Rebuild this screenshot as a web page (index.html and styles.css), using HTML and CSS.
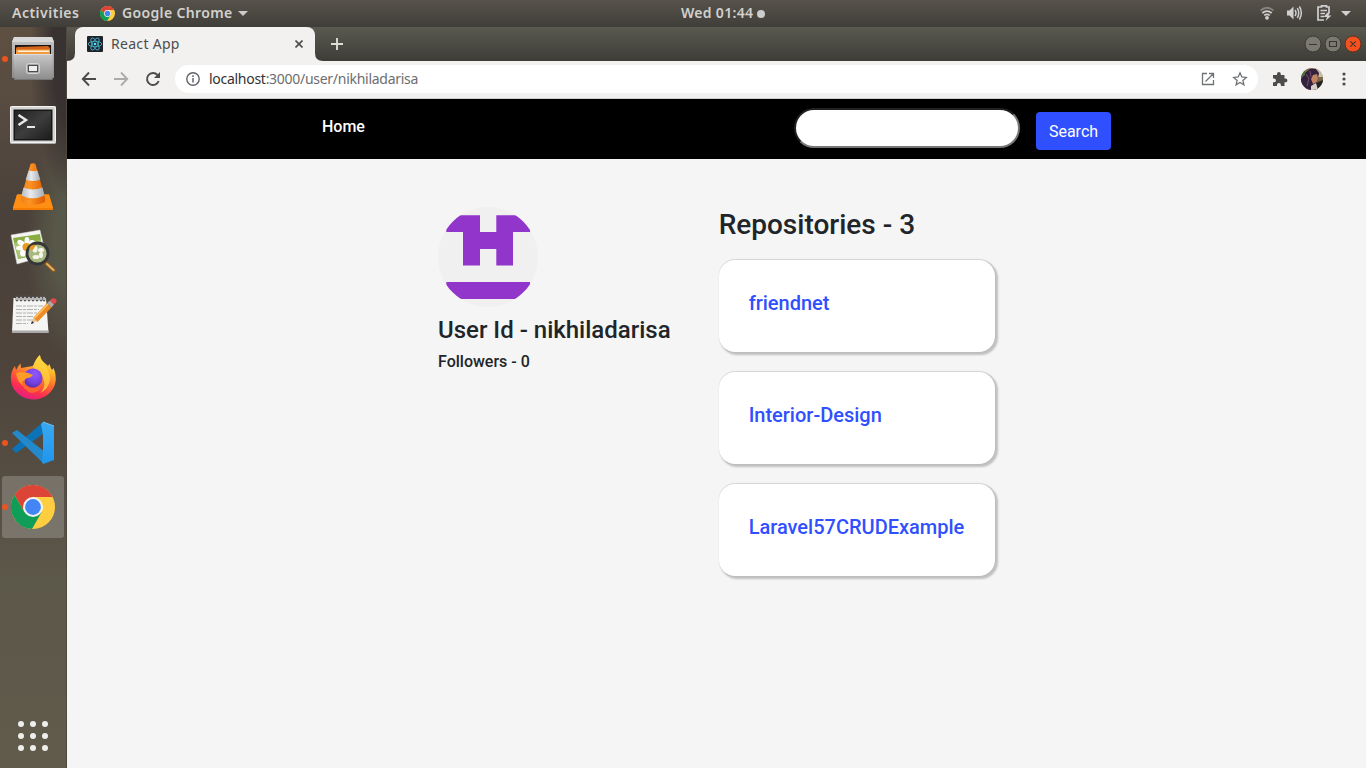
FILE: index.html
```html
<!DOCTYPE html>
<html lang="en">
<head>
<meta charset="utf-8">
<title>React App</title>
<link rel="stylesheet" href="styles.css">
</head>
<body>
<svg width="0" height="0" class="defs">
  <defs>
    <linearGradient id="steel" x2="0" y2="1"><stop stop-color="#c8c8c8"/><stop offset="1" stop-color="#8b8b8b"/></linearGradient>
    <linearGradient id="screen" x2="1" y2="1"><stop stop-color="#222"/><stop offset=".5" stop-color="#3d3d3d"/><stop offset="1" stop-color="#1c1c1c"/></linearGradient>
    <linearGradient id="cone"><stop stop-color="#f0801a"/><stop offset=".35" stop-color="#ff9426"/><stop offset="1" stop-color="#dc5a00"/></linearGradient>
    <linearGradient id="band"><stop stop-color="#b9bec4"/><stop offset=".4" stop-color="#e8ebee"/><stop offset="1" stop-color="#a5abb1"/></linearGradient>
    <linearGradient id="fox" x1=".8" y1="0" x2=".35" y2="1"><stop stop-color="#fff44f"/><stop offset=".3" stop-color="#ffb52b"/><stop offset=".55" stop-color="#ff6a32"/><stop offset=".8" stop-color="#fb2f4f"/><stop offset="1" stop-color="#e41d85"/></linearGradient>
    <radialGradient id="globe" cx=".6" cy=".3" r=".8"><stop stop-color="#9059ff"/><stop offset=".6" stop-color="#7540dd"/><stop offset="1" stop-color="#4b2b9e"/></radialGradient>
    <linearGradient id="blue" x2="0" y2="1"><stop stop-color="#3aa9f0"/><stop offset="1" stop-color="#1f95ee"/></linearGradient>
    <symbol id="chrome" viewBox="0 0 44 44">
      <circle cx="22" cy="22" r="22" fill="#ffcd40"/>
      <path d="M22 12H41.600A22 22 0 0 0 3.500 10.100L13.300 27z" fill="#dc4437"/>
      <path d="M3.500 10.100A22 22 0 0 0 21 44L30.700 27 22 22 13.300 27z" fill="#109d58"/>
      <circle cx="22" cy="22" r="10" fill="#f3f3f3"/>
      <circle cx="22" cy="22" r="7.900" fill="#4285f4"/>
    </symbol>
  </defs>
</svg>
<header class="topbar">
  <div class="top-left">
    <span class="activities">Activities</span>
    <svg class="mini-chrome" width="15" height="15"><use href="#chrome"/></svg>
    <span class="app-name">Google Chrome</span>
    <svg class="caret" width="10" height="5"><path d="M0 0H10L5 5z" fill="#ccc"/></svg>
  </div>
  <div class="clock"><span class="clock-text">Wed 01:44</span><i class="dot"></i></div>
  <div class="tray">
    <svg width="16" height="16" viewBox="1259 6 16 16" fill="none" stroke="#d0d0d0" stroke-width="1.700">
      <path d="M1260.500 10.500Q1267 5 1273.500 10.500" stroke="#85837e"/><path d="M1262.300 13Q1267 9.200 1271.700 13M1264.200 15.400Q1267 13.400 1269.800 15.400"/><circle cx="1267" cy="17.800" r="1.900" fill="#d0d0d0" stroke="none"/>
    </svg>
    <svg class="vol" width="17" height="16" viewBox="1286 6 17 16" fill="none" stroke="#d0d0d0" stroke-width="1.500">
      <path d="M1287 10.500H1289.500L1293.500 6.500V19.500L1289.500 15.500H1287z" fill="#d0d0d0" stroke="none"/><path d="M1295 10Q1297 13 1295 16M1297.300 8.200Q1300.200 13 1297.300 17.800M1299.400 6.500Q1303.300 13 1299.400 19.500"/>
    </svg>
    <svg class="bat" width="16" height="17" viewBox="1316 5 16 17" fill="none" stroke="#d0d0d0" stroke-width="1.700">
      <path d="M1329 13V7H1326.500V5.800H1321.500V7H1318V20H1324M1320.500 10.500H1327M1320.500 13.500H1325M1320.500 16.500H1324"/><path d="M1327.500 12.500L1323.500 17H1327L1325.500 21 1331.500 15.500H1328.500L1330 12.500z" fill="#d0d0d0" stroke="none"/>
    </svg>
    <svg class="tray-caret" width="10" height="5"><path d="M0 0H10L5 5z" fill="#d0d0d0"/></svg>
  </div>
</header>
<div class="desktop">
  <aside class="dock">
    <div class="dock-item running">
      <svg viewBox="0 0 48 48"><path d="M5 2H43L45 7V43H3V7z" fill="url(#steel)"/><path d="M5 2H43L45 7H3z" fill="#d9d9d9"/><path d="M6 10H42V20H6z" fill="#161616"/><path d="M8 12L39 11 41 13V19H7V13z" fill="#d6651b"/><path d="M7 14.500H41V20H7z" fill="#f39b3c"/><path d="M9 15.500H40V17H9z" fill="#fff1dc"/><path d="M4.500 19H43.500V45H5.500z" fill="url(#steel)"/><path d="M5 19.500H43" stroke="#ddd"/><path d="M5 44.500H43" stroke="#777"/><rect x="17.500" y="28.500" width="13" height="10" rx="2" fill="#a5a5a5" stroke="#d5d5d5"/><rect x="19.500" y="30.500" width="9" height="6" fill="#eee" stroke="#4c4c4c"/></svg>
    </div>
    <div class="dock-item">
      <svg viewBox="0 0 48 48"><rect x="1" y="7" width="46" height="38" rx="1.500" fill="#aaa"/><rect x="1.500" y="7.500" width="45" height="36" rx="1" fill="#d5d5d3" stroke="#f2f2f2"/><rect x="4.500" y="10.500" width="39" height="31" fill="#161616"/><rect x="6" y="12" width="36" height="28" fill="url(#screen)"/><path d="M9.500 16L17 21 9.500 26" fill="none" stroke="#e8e8e8" stroke-width="2.500"/><path d="M18 28H26" stroke="#e8e8e8" stroke-width="2"/></svg>
    </div>
    <div class="dock-item">
      <svg viewBox="0 1 48 48"><path d="M8 32.500H40L44 46.500V48H4V46z" fill="#f57c00"/><path d="M8 32.500H40L44 46H4z" fill="#ff8f14"/><path d="M12 36L21.500 2Q24 .5 26.500 2L36 36V40Q24 46 12 40z" fill="url(#cone)"/><path d="M19.700 8.500Q24 10 28.300 8.500L31.300 17.500Q24 20.500 16.700 17.500z" fill="url(#band)"/><path d="M14.500 25.500Q24 29.500 33.500 25.500L35.500 33.500Q24 39 12.500 33.500z" fill="url(#band)"/></svg>
    </div>
    <div class="dock-item">
      <svg viewBox="0 0 48 48"><path d="M2 8L31 3 37 29 8 37z" fill="#f5f5f2" stroke="#ccc" stroke-width=".5"/><path d="M4 11L31 7 34 27 9 32z" fill="#8aad43"/><path d="M5 16L32 13 34 27 9 31z" fill="#aac672"/><g fill="#fff"><ellipse cx="18" cy="14" rx="2.500" ry="4"/><ellipse cx="12" cy="16" rx="4" ry="2.500" transform="rotate(30 12 16)"/><ellipse cx="11" cy="21" rx="4" ry="2.300"/><ellipse cx="14" cy="26" rx="3" ry="3.500"/><ellipse cx="20" cy="28" rx="2.500" ry="4"/><circle cx="23" cy="16" r="3"/></g><circle cx="17.500" cy="20" r="4" fill="#e89a20"/><path d="M36 35L45 43.500" stroke="#8b5a20" stroke-width="4" stroke-linecap="round"/><path d="M38 37L44.500 43" stroke="#e7ad62" stroke-width="2" stroke-linecap="round"/><circle cx="28.500" cy="26.500" r="10.500" fill="#a9b880" stroke="#343638" stroke-width="2.800"/><g fill="#f4f6ec"><ellipse cx="26" cy="22" rx="2.500" ry="3.500"/><ellipse cx="32" cy="23" rx="3" ry="2"/><ellipse cx="27" cy="30" rx="3.500" ry="2"/><ellipse cx="32" cy="28" rx="2" ry="3"/></g><path d="M20 22Q22 17 27 18L24 23z" fill="#e89a20"/></svg>
    </div>
    <div class="dock-item">
      <svg viewBox="0 0 48 48"><path d="M4.500 7H37L39.500 41.500H3z" fill="#f5f5f3"/><path d="M3 39.500H39.500V42H3z" fill="#aaa"/><path d="M7 15H34M7 18.500H30M7 22H29M7 25.500H25M7 29H27M7 32.500H19" stroke="#aaa" stroke-dasharray="6 1 3 1" stroke-width=".9"/><path d="M8 9V6M12 9V6M16 9V6M20 9V6M24 9V6M28 9V6M32 9V6M35 9V6" stroke="#555" stroke-width="2.800" stroke-linecap="round"/><path d="M8 9V6M12 9V6M16 9V6M20 9V6M24 9V6M28 9V6M32 9V6M35 9V6" stroke="#ddd" stroke-width="1.400"/><path d="M22 33L24.500 26 28 30z" fill="#e8c59d"/><path d="M22 33L23 30 25 32z" fill="#222"/><path d="M24.500 26.500L38 12 42.500 16.500 28.500 31z" fill="#ed8b24"/><path d="M25.500 27L39 13" stroke="#ffc06b" stroke-width="1.700"/><path d="M38 12L41 9.500 45 13.500 42.500 16.500z" fill="#aaa"/><path d="M41 9.500L43 7.500Q46 6.500 47.500 9 48 11 46.500 12L45 13.500z" fill="#e34a49"/></svg>
    </div>
    <div class="dock-item">
      <svg viewBox="0 0 48 48"><path d="M24 11C26 7 27 3 31 0C31 5 36 8 39 11L40.500 9Q42 14 43 15L44.500 13Q47.500 20 46.500 27A22.500 21 0 0 1 2 26Q1 17 6 11L7 15Q9 11 11.500 8.500L12 13Q18 12 24 11z" fill="url(#fox)"/><path d="M31 0C31 7 41 12 41 24Q40 34 31 38 39 31 32 18L24 12Q26 5 31 0z" fill="#ffd33d" fill-opacity=".75"/><circle cx="24" cy="23" r="9.500" fill="url(#globe)"/><path d="M7 18Q15 15 24 20 22 23 18 23C14 25 15 29 18 33Q8 29 7 18z" fill="#ff9b26"/><path d="M15 25Q15 31 22 33 29 34 33 27 33 37 23 38 14 36 13 27z" fill="#ff632f"/></svg>
    </div>
    <div class="dock-item running">
      <svg viewBox="0 0 48 48"><path d="M3 30L7 34 34 15V3z" fill="#0c73b9"/><path d="M3 14L8 11 36 33 34 44z" fill="#2489ca"/><path d="M34 3L45 7V41L34 45 33 43 34 33V16L32 5z" fill="url(#blue)"/><path d="M34 3L45 7" stroke="#6dc1f3"/></svg>
    </div>
    <div class="dock-item running active">
      <svg viewBox="0 0 48 48"><use href="#chrome" x="2" y="2" width="44" height="44"/></svg>
    </div>
    <div class="apps"><i></i><i></i><i></i><i></i><i></i><i></i><i></i><i></i><i></i></div>
  </aside>
  <section class="browser">
    <div class="tabs">
      <div class="tab">
        <svg class="curve" width="8" height="8"><path d="M8 0V8H0Q8 8 8 0z" fill="#f2f1f0"/></svg>
        <svg class="curve curve-right" width="8" height="8"><path d="M0 0V8H8Q0 8 0 0z" fill="#f2f1f0"/></svg>
        <svg width="16" height="16" viewBox="0 0 16 16"><rect width="16" height="16" rx="1" fill="#20232a"/><g fill="none" stroke="#46bcd8" stroke-width=".8"><ellipse cx="8" cy="8" rx="6.800" ry="2.700"/><ellipse cx="8" cy="8" rx="6.800" ry="2.700" transform="rotate(60 8 8)"/><ellipse cx="8" cy="8" rx="6.800" ry="2.700" transform="rotate(120 8 8)"/></g><circle cx="8" cy="8" r="1.300" fill="#61dafb"/></svg>
        <span class="tab-title">React App</span>
        <svg class="close" width="8" height="8"><path d="M.5 .5L7.500 7.500M7.500 .5L.5 7.500" stroke="#4c4c4c" stroke-width="1.600"/></svg>
      </div>
      <svg class="plus" width="12" height="12"><path d="M6 0V12M0 6H12" stroke="#deddd5" stroke-width="1.900"/></svg>
      <div class="controls">
        <svg width="60" height="20" viewBox="1304 34 60 20" fill="none"><g fill="#7b7970" stroke="#3b3a35"><circle cx="1313" cy="44" r="8"/><circle cx="1333" cy="44" r="8"/><circle cx="1353" cy="44" r="8" fill="#f4511e" stroke="#5a3326"/></g><path d="M1309 44.500H1317M1329.500 41.500H1336.500V46.500H1329.500zM1350.300 41.300L1355.700 46.700M1355.700 41.300L1350.300 46.700" stroke="#37362f" stroke-width="1.100"/></svg>
      </div>
    </div>
    <div class="toolbar">
      <svg width="98" height="20" viewBox="77 69 98 20" fill="none" stroke="#4b4b4b" stroke-width="1.900"><path d="M96 79H83M89 72.500L82.800 79 89 85.500"/><path d="M114 79H127M121 72.500L127.200 79 121 85.500" stroke="#acabaa"/><path d="M157.500 75A6 6 0 1 0 158.700 81"/><path d="M160 72V78H154z" fill="#4b4b4b" stroke="none"/></svg>
      <div class="omnibox">
        <svg width="14" height="14"><circle cx="7" cy="7" r="6.200" fill="none" stroke="#5f6368" stroke-width="1.400"/><path d="M7 6V10.500M7 3.300V4.900" stroke="#5f6368" stroke-width="1.500"/></svg>
        <span class="url"><b>localhost</b>:3000/user/nikhiladarisa</span>
        <svg class="omni-icons" width="48" height="16" viewBox="1200 71 48 16" fill="none" stroke="#707376" stroke-width="1.300"><path d="M1207 73.500H1202.500V84.500H1213.500V80M1209 73.500H1213.500V78M1213 74L1205.500 81.500"/><path d="M1240 72.800L1241.800 77 1246.300 77.400 1242.900 80.400 1243.900 84.800 1240 82.500 1236.100 84.800 1237.100 80.400 1233.700 77.400 1238.200 77z"/></svg>
      </div>
      <svg class="puzzle" width="16" height="16" viewBox="1272 71 16 16"><path d="M1273 75H1277V74A1.900 1.900 0 0 1 1280.800 74V75H1284.500V78.500H1285.500A1.900 1.900 0 0 1 1285.500 82.300H1284.500V86H1280.900V85A1.900 1.900 0 0 0 1277 85V86H1273V82.300H1274A1.900 1.900 0 0 0 1274 78.500H1273z" fill="#4c4c4c"/></svg>
      <svg class="profile" width="22" height="22"><defs><clipPath id="face"><circle cx="11" cy="11" r="11"/></clipPath></defs><g clip-path="url(#face)"><path d="M0 0H22V22H0z" fill="#7a674d"/><path d="M14 0H22V9H14z" fill="#c9bea1"/><path d="M0 11L4 5 9 1 15 1 18 5 16 15 10 22H0z" fill="#33213d"/><path d="M12 7L16 6 17 10 16 14 12 16 10 11z" fill="#c28361"/><path d="M12 17L17 14 22 12V22H12z" fill="#242424"/><path d="M10 18L15 15 17 22H10z" fill="#d8cfc8"/><path d="M5 6L8 10 6 18M9 3L10 9" stroke="#76516f" fill="none"/><path d="M0 4L4 2V7L0 10z" fill="#4e6b42"/></g></svg>
      <svg class="kebab" width="4" height="14"><g fill="#4c4c4c"><circle cx="2" cy="2" r="1.600"/><circle cx="2" cy="7" r="1.600"/><circle cx="2" cy="12" r="1.600"/></g></svg>
    </div>
    <main class="page">
      <nav class="nav">
        <a class="home">Home</a>
        <form class="search"><input type="text" aria-label="Search"><button type="button">Search</button></form>
      </nav>
      <div class="content">
        <section class="user">
          <svg class="avatar" width="100" height="100"><defs><clipPath id="round"><circle cx="50" cy="50" r="50"/></clipPath></defs><g clip-path="url(#round)"><path d="M0 0H100V100H0z" fill="#f0f0f0"/><path d="M8.300 8.300H42V25H58.300V8.300H92V25H75V58.500H58.300V42H42V58.500H25V25H8.300zM8.300 75H92V92H8.300z" fill="#9135cb"/></g></svg>
          <h4>User Id - nikhiladarisa</h4>
          <h6>Followers - 0</h6>
        </section>
        <section class="repos">
          <h3>Repositories - 3</h3>
          <article class="card"><h5>friendnet</h5></article>
          <article class="card"><h5>Interior-Design</h5></article>
          <article class="card"><h5>Laravel57CRUDExample</h5></article>
        </section>
      </div>
    </main>
  </section>
</div>
</body>
</html>
```

FILE: styles.css
```css
* { box-sizing: border-box; }
body { margin: 0; width: 1366px; height: 768px; overflow: hidden; display: flex; flex-direction: column; font-family: Roboto, sans-serif; color: #212529; }
svg { display: block; flex: none; }
.defs { position: absolute; }
h3, h4, h5, h6 { margin: 0; font-weight: 500; line-height: 1.2; white-space: nowrap; }

.topbar { height: 27px; flex: none; display: grid; grid-template-columns: 681px auto 1fr; align-items: center; background: linear-gradient(#57534b, #403e39); color: #d2d1ce; font: 600 14px/26px "Noto Sans", sans-serif; }
.top-left { display: flex; align-items: center; padding-left: 12px; white-space: nowrap; }
.activities { width: 88px; letter-spacing: .5px; }
.app-name { margin-left: 7px; width: 110px; letter-spacing: .35px; }
.caret { margin-left: 6px; }
.clock { display: flex; align-items: center; gap: 3px; }
.clock-text { width: 73px; white-space: nowrap; letter-spacing: .3px; }
.activities, .app-name, .clock-text { margin-top: -1px; }
.dot { width: 8px; height: 8px; border-radius: 50%; background: #ccc; }
.tray { display: flex; align-items: center; justify-content: flex-end; padding-right: 15px; }
.vol { margin-left: 11px; }
.bat { margin-left: 13px; }
.tray-caret { margin-left: 9px; }

.desktop { flex: 1; display: flex; min-height: 0; }
.dock {
  width: 67px; flex: none; display: flex; flex-direction: column; border-right: 1px solid #4d493f;
  background:
    radial-gradient(ellipse 45px 150px at 75px 25px, rgba(54, 49, 49, .95) 50%, transparent),
    radial-gradient(ellipse 50px 120px at 75px 215px, #585849 40%, transparent),
    linear-gradient(#5e5041 0, #564a40 12%, #4a413a 25%, #4d433b 45%, #554d42 60%, #5c584a 75%, #605b4b 100%);
}
.dock-item { height: 64px; padding: 8px 0 8px 9px; position: relative; }
.dock-item svg { width: 48px; height: 48px; }
.running::before { content: ""; position: absolute; left: 2px; top: 29px; width: 6px; height: 6px; border-radius: 50%; background: #e95420; }
.active::after { content: ""; position: absolute; z-index: 0; left: 2px; top: 1px; width: 62px; height: 62px; border-radius: 3px; background: rgba(255, 255, 255, .2); }
.active svg { position: relative; z-index: 1; }
.active::before { z-index: 1; }
.apps { margin: auto 0 17px 18px; display: grid; grid-template-columns: repeat(3, 6px); gap: 6px; }
.apps i { height: 6px; border-radius: 50%; background: #eeeeec; }

.browser { flex: 1; display: flex; flex-direction: column; min-width: 0; }
.tabs { height: 34px; flex: none; display: flex; align-items: center; padding-left: 8px; background: linear-gradient(#5b5a50, #3d3c37); }
.tab { width: 240px; height: 34px; padding: 0 12px; display: flex; align-items: center; border-radius: 8px 8px 0 0; background: #f2f1f0; position: relative; }
.curve { position: absolute; left: -8px; bottom: 0; }
.curve-right { left: auto; right: -8px; }
.tab-title { margin-left: 8px; font: 14px/20px "Noto Sans", sans-serif; color: #4c4c4c; letter-spacing: .3px; }
.close { margin-left: auto; }
.plus { margin-left: 16px; }
.controls { margin-left: auto; padding-right: 2px; }
.toolbar { height: 38px; flex: none; display: flex; align-items: center; padding: 0 20px 1px 10px; background: #f2f1f0; border-bottom: 1px solid #cdd0cf; }
.omnibox { width: 1083px; height: 28px; border-radius: 14px; padding: 0 10px 0 11px; display: flex; align-items: center; background: #fff; }
.url { margin-left: 9px; font: 14px/20px "Noto Sans", sans-serif; color: #6d6d6d; letter-spacing: -.28px; white-space: nowrap; }
.url b { font-weight: 400; color: #333; }
.omni-icons { margin-left: auto; }
.puzzle { margin-left: 14px; }
.profile { margin-left: 13px; }
.kebab { margin-left: auto; }

.page { flex: 1; min-height: 0; background: #f5f5f5; }
.nav { height: 60px; padding: 9px 255px 0; display: flex; justify-content: space-between; background: #000; }
.home { padding-top: 7px; font: 500 16px/24px Roboto, sans-serif; color: #fff; }
.search { display: flex; gap: 16px; align-items: flex-start; }
.search input { width: 226px; height: 40px; border: 2px inset #767676; border-radius: 20px; background: #fff; outline: 0; }
.search button { width: 75px; height: 38px; margin-top: 4px; padding: 2px 0 0; border: 0; border-radius: 4px; background: #304ffe; color: #fff; font: 16px/24px Roboto, sans-serif; }
.content { display: flex; gap: 48px; padding: 48px 0 0 371px; }
.user h4 { margin-top: 9px; font-size: 24px; }
.user h6 { margin-top: 7px; font-size: 16px; }
.repos h3 { padding-top: 1px; font-size: 28px; margin-bottom: 18px; }
.card { width: 276px; height: 92px; margin-bottom: 20px; padding: 31px 30px 0; border-radius: 16px; background: #fff; box-shadow: 0 -.5px 1px rgba(0, 0, 0, .12), 2px 2px 2px 1px #c0c0c0; }
.card h5 { font-size: 20px; color: #304ffe; }
```
